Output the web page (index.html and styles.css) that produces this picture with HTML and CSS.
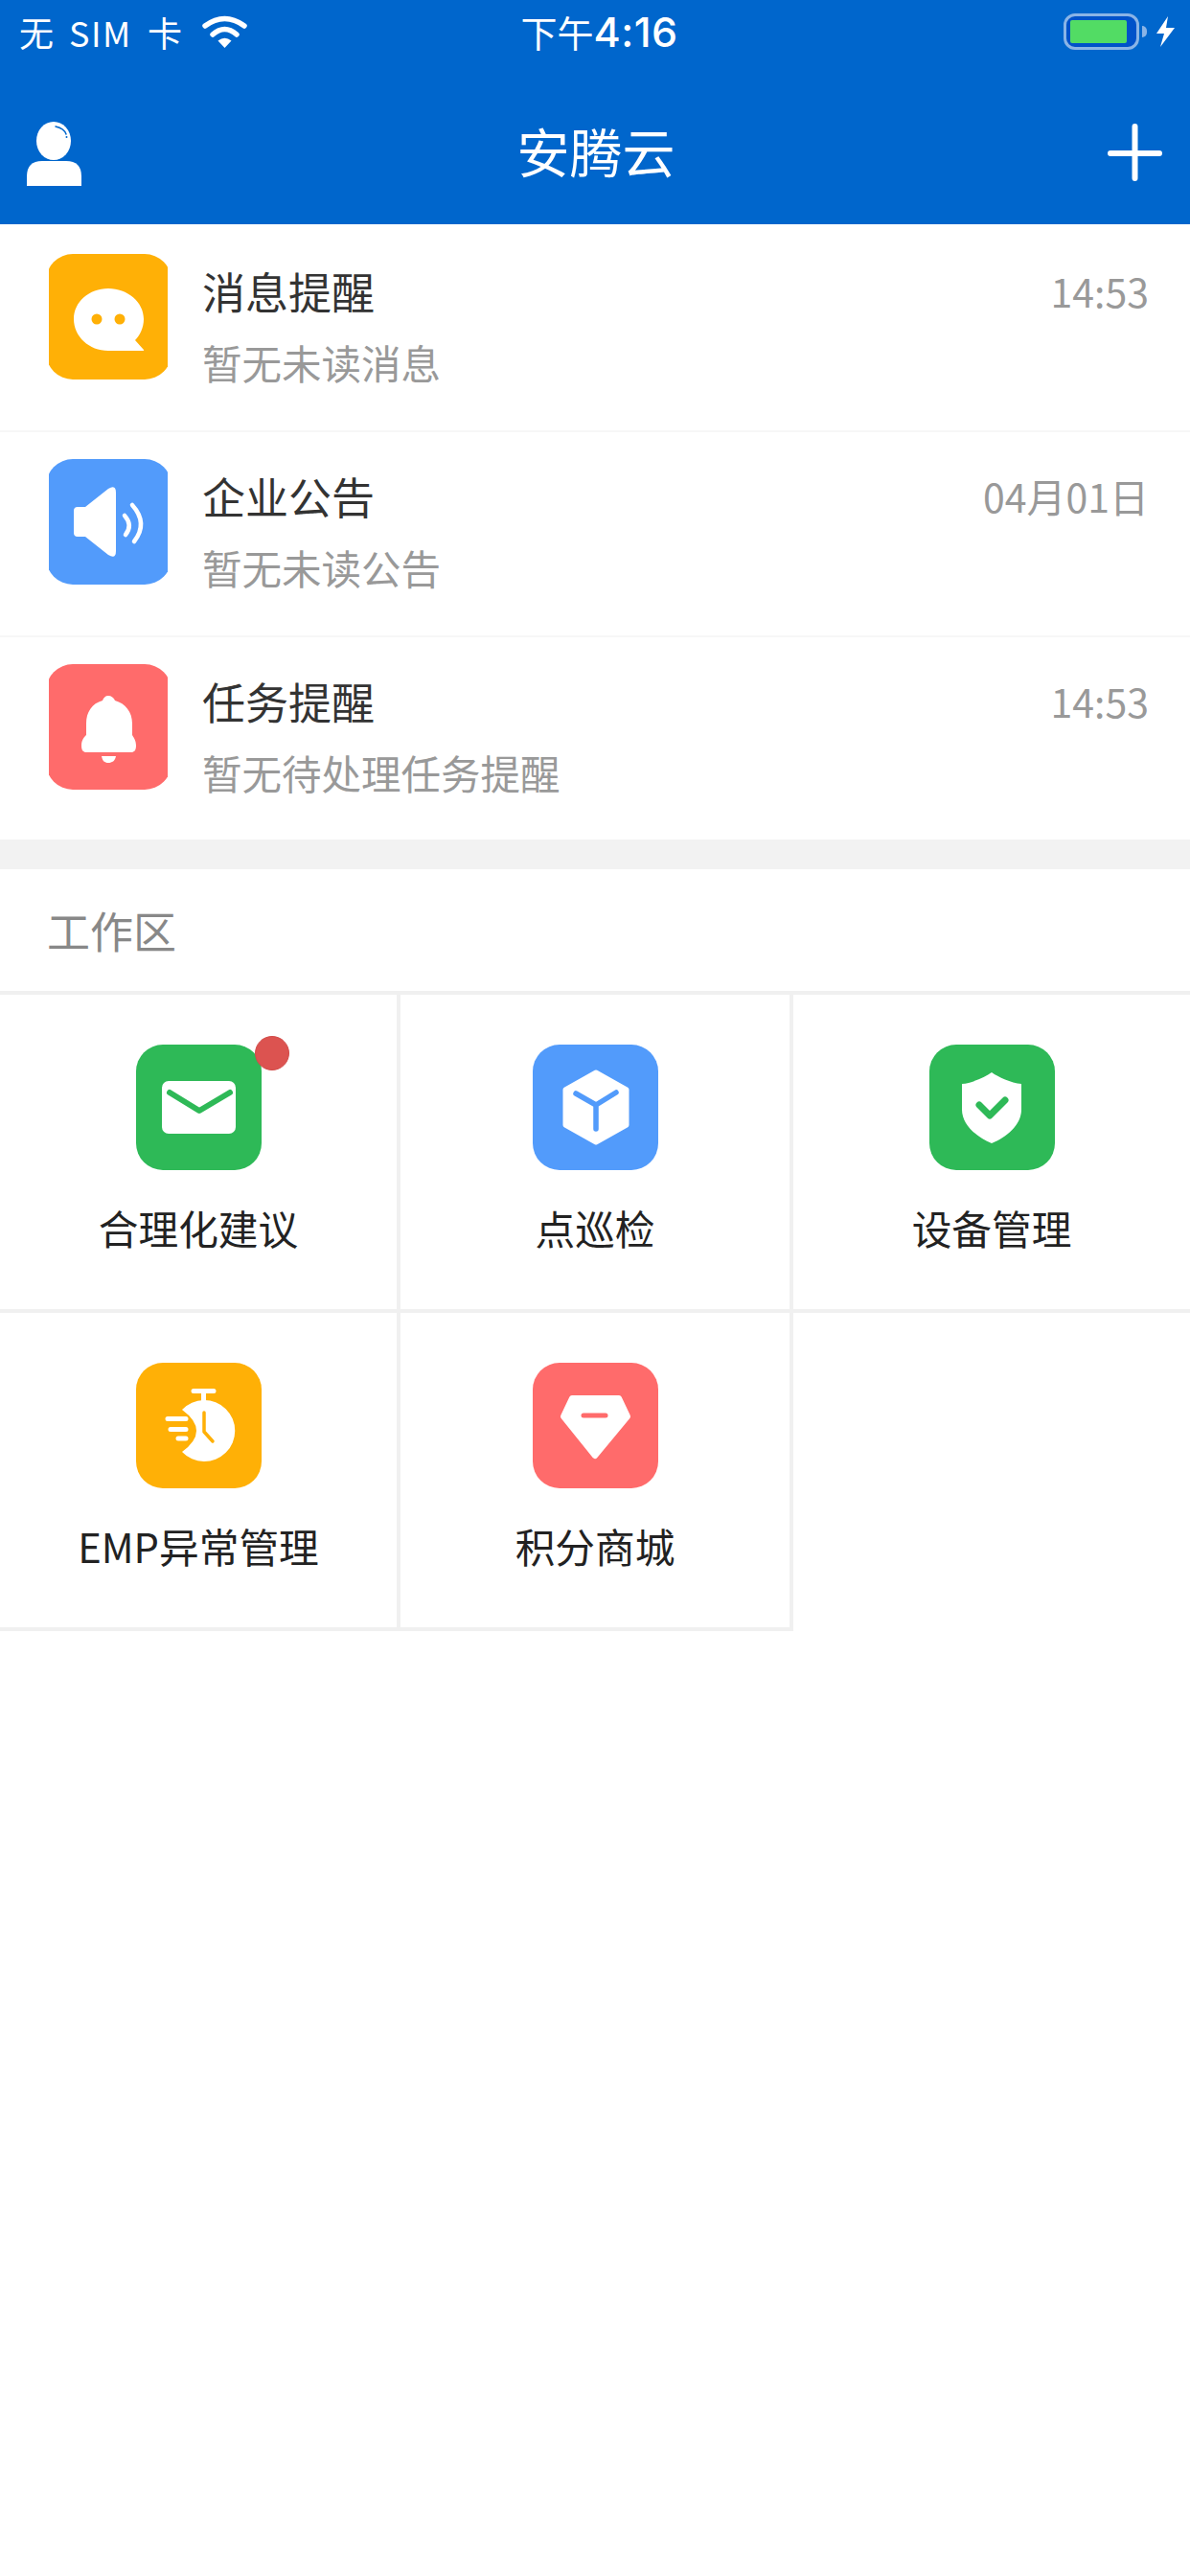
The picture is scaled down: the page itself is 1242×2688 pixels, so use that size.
FILE: index.html
```html
<!DOCTYPE html>
<html lang="zh-CN">
<head>
  <meta charset="UTF-8">
  <title>安腾云</title>
  <meta name="viewport" content="width=device-width, initial-scale=1.0">
  <link rel="stylesheet" href="styles.css">
</head>
<body>
  <header class="header">
    <div class="statusbar">
      <div class="status-left">
        <span class="carrier">无 <span class="carrier-sim">SIM</span> 卡</span>
        <svg class="wifi" width="47" height="34" viewBox="0 0 47 34">
          <path class="wifi-arc" d="M3 11 Q23.5 -4 44 11"/>
          <path class="wifi-arc" d="M11 20 Q23.5 9 36 20"/>
          <path class="white" d="M16.5 26.5 Q23.5 21 30.5 26.5 L23.5 34 Z"/>
        </svg>
      </div>
      <div class="clock">下午<span class="clock-num">4:16</span></div>
      <div class="status-right">
        <div class="battery"><div class="battery-fill"></div></div>
        <div class="battery-nub"></div>
        <svg class="bolt" width="19" height="32" viewBox="0 0 19 32">
          <path class="white" d="M12 0 L0 18 H8 L4 32 L19 12 H10 Z"/>
        </svg>
      </div>
    </div>
    <div class="navbar">
      <svg width="59" height="69" viewBox="0 0 59 69">
        <ellipse class="white" cx="29" cy="22" rx="18" ry="20"/>
        <path class="user-shine" d="M31 7 Q40 9 42 15"/>
        <circle class="user-dot" cx="42.500" cy="18" r="1"/>
        <path class="white" d="M1 69 V59 Q1 43 17 43 H42 Q58 43 58 59 V69 Z"/>
      </svg>
      <h1 class="nav-title">安腾云</h1>
      <svg width="57" height="60" viewBox="0 0 57 60">
        <path class="plus" d="M3 31 H54 M28.500 3 V57"/>
      </svg>
    </div>
  </header>

  <ul class="list">
    <li class="row">
      <div class="row-icon">
        <div class="row-icon-bg amber">
          <svg width="124" height="131" viewBox="0 0 124 131">
            <path class="white" d="M62 36 C82 36 99 50 99 68 C99 77 95 85 90 90 L99 100 Q100 101 97 101 L62 101 C42 101 26 86 26 68 C26 50 42 36 62 36 Z"/>
            <circle class="amber-fill" cx="50" cy="68" r="5.500"/>
            <circle class="amber-fill" cx="74" cy="68" r="5.500"/>
          </svg>
        </div>
      </div>
      <div class="row-text">
        <div class="row-head">
          <span class="row-title">消息提醒</span>
          <span class="row-time">14:53</span>
        </div>
        <div class="row-sub">暂无未读消息</div>
      </div>
    </li>
    <li class="row">
      <div class="row-icon">
        <div class="row-icon-bg blue">
          <svg width="124" height="131" viewBox="0 0 124 131">
            <path class="white" d="M30 50 H38 L62 31 Q70 26 70 35 V96 Q70 105 62 100 L38 81 H30 Q26 81 26 77 V54 Q26 50 30 50 Z"/>
            <path class="sound" d="M79 59 Q88 69 80 79"/>
            <path class="sound" d="M87 48 Q104 67 89 86"/>
          </svg>
        </div>
      </div>
      <div class="row-text">
        <div class="row-head">
          <span class="row-title">企业公告</span>
          <span class="row-time">04月01日</span>
        </div>
        <div class="row-sub">暂无未读公告</div>
      </div>
    </li>
    <li class="row">
      <div class="row-icon">
        <div class="row-icon-bg coral">
          <svg width="124" height="131" viewBox="0 0 124 131">
            <path class="white" d="M62 33 C65 33 68 35 69 38 C80 41 87 50 87 62 V74 C88 76 91 79 91 85 C91 90 89 92 86 92 H39 C36 92 34 90 34 85 C34 79 37 76 39 74 V62 C39 50 45 41 56 38 C57 35 59 33 62 33 Z"/>
            <path class="white" d="M55 96 H70 C69 101 66 103 62 103 C58 103 56 101 55 96 Z"/>
          </svg>
        </div>
      </div>
      <div class="row-text">
        <div class="row-head">
          <span class="row-title">任务提醒</span>
          <span class="row-time">14:53</span>
        </div>
        <div class="row-sub">暂无待处理任务提醒</div>
      </div>
    </li>
  </ul>

  <div class="band"></div>

  <h2 class="section-title">工作区</h2>

  <div class="grid">
    <div class="cell">
      <div class="tile green">
        <svg width="131" height="131" viewBox="0 0 131 131">
          <rect class="white" x="27" y="38" width="77" height="55" rx="7"/>
          <path class="mail-v" d="M35 50 L66 69 L98 50"/>
        </svg>
        <span class="badge"></span>
      </div>
      <div class="cell-label">合理化建议</div>
    </div>
    <div class="cell">
      <div class="tile blue">
        <svg width="131" height="131" viewBox="0 0 131 131">
          <path class="cube" d="M66 29 L98 47 V84 L66 102 L34 84 V47 Z"/>
          <path class="cube-y" d="M45 51 L66 63 L87 50 M66 63 V88"/>
        </svg>
      </div>
      <div class="cell-label">点巡检</div>
    </div>
    <div class="cell cell-last">
      <div class="tile green">
        <svg width="131" height="131" viewBox="0 0 131 131">
          <path class="white" d="M65 29 C72 34 85 40 96 41 V68 C96 84 80 97 65 103 C50 97 34 84 34 68 V41 C45 40 58 34 65 29 Z"/>
          <path class="shield-check" d="M52 63 L63 74 L79 58"/>
        </svg>
      </div>
      <div class="cell-label">设备管理</div>
    </div>
    <div class="cell">
      <div class="tile amber">
        <svg width="131" height="131" viewBox="0 0 131 131">
          <path class="white" d="M48 49 A32 32 0 1 1 48 93 Q78 71 48 49 Z"/>
          <path class="watch-line" d="M60 29.500 H81 M70.500 30 V42"/>
          <path class="watch-hand" d="M71 52 V72 L80 82"/>
          <path class="watch-line" d="M33 58.500 H52 M36 69.500 H52 M44 79 H52"/>
        </svg>
      </div>
      <div class="cell-label">EMP异常管理</div>
    </div>
    <div class="cell">
      <div class="tile coral">
        <svg width="131" height="131" viewBox="0 0 131 131">
          <path class="gem" d="M41 37 H90 L99 56 L65 97 L32 56 Z"/>
          <path class="gem-dash" d="M53 55 H76"/>
        </svg>
      </div>
      <div class="cell-label">积分商城</div>
    </div>
  </div>
</body>
</html>
```

FILE: styles.css
```css
* {
  box-sizing: border-box;
}
body {
  margin: 0;
  background: #fff;
  font-family: "Noto Sans CJK SC", "Noto Sans", sans-serif;
  color: #333;
}
h1, h2, ul {
  margin: 0;
  padding: 0;
  font-weight: 400;
}
li {
  list-style: none;
}
svg {
  display: block;
}

/* shared svg paints */
.white {
  fill: #fff;
}
.amber-fill {
  fill: #ffb006;
}

/* top bar */
.header {
  height: 234px;
  background: #0066cc;
  color: #fff;
}
.statusbar {
  height: 68px;
  display: grid;
  grid-template-columns: 1fr auto 1fr;
  align-items: center;
  padding: 0 16px 2px 20px;
}
.status-left {
  display: flex;
  align-items: center;
  gap: 21px;
}
.carrier {
  font-size: 36px;
  line-height: 50px;
  word-spacing: 8px;
}
.carrier-sim {
  letter-spacing: 1.5px;
}
.wifi-arc {
  fill: none;
  stroke: #fff;
  stroke-width: 5.500;
  stroke-linecap: round;
}
.clock {
  margin-left: 5px;
  font-size: 38px;
  line-height: 50px;
  display: flex;
  align-items: center;
}
.clock-num {
  font-family: Inter, "Liberation Sans", sans-serif;
  font-size: 43px;
  font-weight: 500;
  letter-spacing: 0.5px;
}
.status-right {
  display: flex;
  align-items: center;
  justify-content: flex-end;
}
.battery {
  width: 79px;
  height: 38px;
  padding: 4px;
  border: 3px solid #8ab4e6;
  border-radius: 12px;
  background: #0052c9;
}
.battery-fill {
  width: 59px;
  height: 24px;
  border-radius: 2px;
  background: #52dc64;
}
.battery-nub {
  width: 5px;
  height: 12px;
  margin-left: 3px;
  border-radius: 0 6px 6px 0;
  background: #8ab4e6;
}
.bolt {
  margin-left: 10px;
}

.navbar {
  height: 166px;
  display: flex;
  align-items: center;
  justify-content: space-between;
  padding: 16px 29px 0 27px;
}
.nav-title {
  font-size: 55px;
  line-height: 70px;
  padding: 0 0 6px 2px;
}
.user-shine {
  fill: none;
  stroke: #0066cc;
  stroke-width: 1.500;
  stroke-linecap: round;
}
.user-dot {
  fill: #0066cc;
}
.plus {
  fill: none;
  stroke: #fff;
  stroke-width: 6;
  stroke-linecap: round;
}

/* message list */
.list {
  padding-top: 3px;
}
.row {
  height: 214px;
  display: flex;
  padding: 28px 43px 0 51px;
  border-bottom: 2px solid #f7f7f7;
}
.row:last-child {
  height: 211px;
  border-bottom: 0;
}
.row-icon {
  flex: none;
  width: 124px;
  height: 131px;
  overflow: hidden;
}
/* the square tile is a bit wider than its slot, so its sides get cut off */
.row-icon-bg {
  width: 131px;
  height: 131px;
  margin-left: -3.5px;
  padding-left: 3.5px;
  border-radius: 28px;
}
.amber {
  background: #ffb006;
}
.blue {
  background: #529bfb;
}
.coral {
  background: #ff6b6b;
}
.green {
  background: #2eb957;
}
.row-text {
  flex: 1;
  margin-left: 36px;
  padding-top: 6px;
}
.row-head {
  display: flex;
  justify-content: space-between;
  align-items: center;
  height: 64px;
}
.row-title {
  font-size: 45px;
  color: #333;
}
.row-time {
  font-size: 41px;
  color: #999;
}
.row-sub {
  margin-top: 18px;
  font-size: 41.5px;
  line-height: 50px;
  color: #999;
}
.sound {
  fill: none;
  stroke: #fff;
  stroke-width: 4.500;
  stroke-linecap: round;
}

.band {
  height: 31px;
  background: #f2f2f2;
}
.section-title {
  height: 127px;
  padding: 0 0 0 49px;
  display: flex;
  align-items: center;
  font-size: 45px;
  color: #888;
}

/* workspace grid */
.grid {
  display: grid;
  grid-template-columns: 418px 410px 414px;
  grid-auto-rows: 332px;
  border-top: 4px solid #f0f0f0;
}
.cell {
  display: flex;
  flex-direction: column;
  align-items: center;
  padding-top: 52px;
  border-right: 4px solid #f0f0f0;
  border-bottom: 4px solid #f0f0f0;
}
.cell-last {
  border-right: 0;
}
.tile {
  position: relative;
  width: 131px;
  height: 131px;
  border-radius: 28px;
}
.badge {
  position: absolute;
  top: -9px;
  left: 124px;
  width: 36px;
  height: 36px;
  border: 1px solid #d24a48;
  border-radius: 50%;
  background: #dc5350;
}
.cell-label {
  margin-top: 32px;
  font-size: 41.7px;
  line-height: 56px;
  color: #222;
}
.mail-v {
  fill: none;
  stroke: #2eb957;
  stroke-width: 6;
  stroke-linecap: round;
  stroke-linejoin: round;
}
.cube {
  fill: #fff;
  stroke: #fff;
  stroke-width: 5;
  stroke-linejoin: round;
}
.cube-y {
  fill: none;
  stroke: #529bfb;
  stroke-width: 5.500;
  stroke-linecap: round;
  stroke-linejoin: round;
}
.shield-check {
  fill: none;
  stroke: #2eb957;
  stroke-width: 7;
  stroke-linecap: round;
  stroke-linejoin: round;
}
.watch-line {
  fill: none;
  stroke: #fff;
  stroke-width: 5;
  stroke-linecap: round;
}
.watch-hand {
  fill: none;
  stroke: #ffb006;
  stroke-width: 3.500;
  stroke-linecap: round;
  stroke-linejoin: round;
}
.gem {
  fill: #fff;
  stroke: #fff;
  stroke-width: 6;
  stroke-linejoin: round;
}
.gem-dash {
  fill: none;
  stroke: #ff6b6b;
  stroke-width: 5;
  stroke-linecap: round;
}
```
